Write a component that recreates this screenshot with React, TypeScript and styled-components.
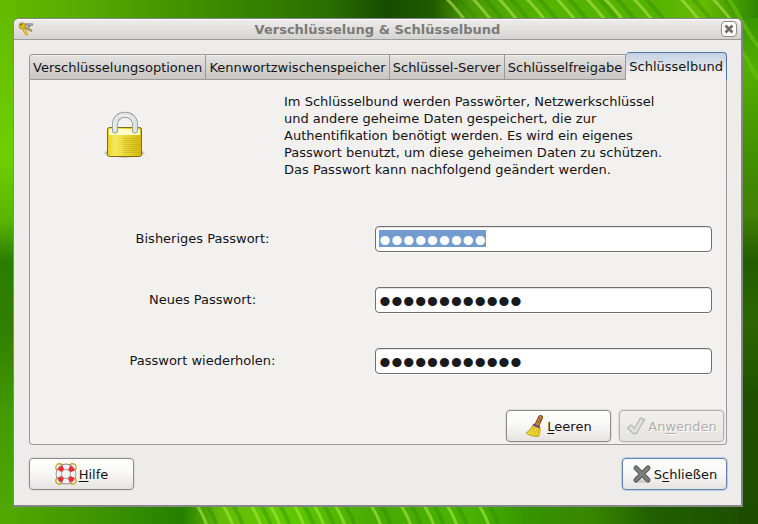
import React, { useEffect, useRef } from "react";
import styled, { createGlobalStyle, css } from "styled-components";

const Global = createGlobalStyle`
  *, *::before, *::after { box-sizing: border-box; }
  body { margin: 0; font: 13px/17px "DejaVu Sans", sans-serif; color: #141414; }
  button, input { font: inherit; color: inherit; }
`;

const Desktop = styled.div`
  position: relative;
  display: flex;
  min-height: 100vh;
  padding: 18px 15px 17px 13px;
  background: #2f7d02;
`;

const Wallpaper = styled.svg`
  position: absolute;
  inset: 0;
  width: 100%;
  height: 100%;
`;

const Dialog = styled.main`
  position: relative;
  flex: 1;
  min-width: 0;
  display: flex;
  flex-direction: column;
  background: #edeceb;
  border: 1px solid #858585;
  border-bottom-width: 2px;
  border-right-width: 2px;
  border-radius: 6px 6px 0 0;
`;

const TitleBar = styled.header`
  display: grid;
  grid-template-columns: 24px 1fr 24px;
  align-items: center;
  height: 21px;
  padding: 0 4px 0 4px;
  border-bottom: 1px solid #9b9b99;
  border-radius: 5px 5px 0 0;
  box-shadow: inset 0 1px #fbfbfb;
  background: linear-gradient(#eeedec, #e2e1df 50%, #d5d3d1);
`;

const Title = styled.h1`
  margin: 0;
  text-align: center;
  font-size: 13px;
  line-height: 17px;
  color: #7b7a77;
`;

const CloseButton = styled.button`
  display: grid;
  place-items: center;
  justify-self: end;
  width: 16px;
  height: 16px;
  padding: 0;
  background: #fbfbfb;
  border: 1px solid #8d8d8b;
  border-radius: 4px;
`;

const Content = styled.div`
  flex: 1;
  display: flex;
  flex-direction: column;
  padding: 12px 14px 15px 15px;
`;

const Tabs = styled.div`
  display: flex;
  align-items: flex-end;
`;

const Tab = styled.button<{ $active?: boolean }>`
  flex: 1 1 auto;
  height: 26px;
  padding: 0 2px;
  white-space: nowrap;
  border: 1px solid #989896;
  border-left-width: 0;
  background: linear-gradient(#e4e3e1, #c9c6c3);
  box-shadow: inset 0 1px #f1f0ef;
  &:first-child { border-left-width: 1px; border-top-left-radius: 3px; }
  ${p => p.$active && css`
    height: 28px;
    padding-bottom: 1px;
    border: 1px solid #5376a5;
    border-left-width: 0;
    border-bottom: 0;
    border-radius: 4px 4px 0 0;
    background: linear-gradient(#c3d0e4, #f2f1f0 80%);
    box-shadow: none;
  `}
`;

const Panel = styled.form`
  flex: 1;
  display: flex;
  flex-direction: column;
  justify-content: space-between;
  padding: 13px 2px 2px 0;
  background: #f2f1f0;
  border: 1px solid #9a9a98;
  border-top: 0;
  border-radius: 0 0 4px 4px;
`;

const Intro = styled.div`
  display: grid;
  grid-template-columns: 190px 1fr;
  column-gap: 64px;
`;

const LockCell = styled.div`
  display: flex;
  justify-content: center;
  padding-top: 18px;
`;

const Description = styled.p`
  margin: 0;
`;

const Fields = styled.div`
  display: grid;
  gap: 35px;
  padding: 11px 12px 0 0;
`;

const Field = styled.div`
  display: grid;
  grid-template-columns: 345px minmax(0, 1fr);
  align-items: center;
`;

const Label = styled.label`
  text-align: center;
`;

const InputFrame = styled.div`
  display: flex;
  align-items: flex-start;
  height: 26px;
  padding: 3px;
  background: #fff;
  border: 1px solid #6f6f6f;
  border-radius: 4px;
  box-shadow: inset 0 1px #e4e4e4, 0 1px #fafafa;
`;

const PasswordInput = styled.input`
  width: 100%;
  min-width: 0;
  height: 17px;
  padding: 5px 0 0;
  font: 34px/17px "Liberation Sans", sans-serif;
  color: #1a1a1a;
  background: none;
  border: 0;
  outline: 0;
  overflow: hidden;
  caret-color: transparent;
  &::selection { color: #fff; background: #729bd0; }
`;

const Actions = styled.div<{ $apart?: boolean }>`
  display: flex;
  justify-content: ${p => (p.$apart ? "space-between" : "flex-end")};
  gap: 8px;
  ${p => p.$apart && "padding: 13px 0 0 0;"}
`;

const Button = styled.button<{ $focus?: boolean }>`
  display: flex;
  align-items: center;
  justify-content: center;
  gap: 2px;
  min-width: 105px;
  height: 32px;
  padding: 0 5px;
  background: linear-gradient(#fff, #f8f8f7 45%, #e6e4e2);
  border: 1px solid #8b8b89;
  border-radius: 4px;
  box-shadow: 0 0 0 1px #e0dfde;
  ${p => p.$focus && css`
    border-color: #5f83b5;
    box-shadow: 0 0 0 1px #bccbe0;
  `}
  &:disabled {
    color: #b0adaa;
    background: linear-gradient(#f1f0ef, #e6e4e2);
    border-color: #b3b1af;
    text-shadow: 1px 1px #fff;
  }
`;

const Mnemonic = styled.u`
  text-underline-offset: 2px;
`;

const KeysIcon = () => (
  <svg width="16" height="16" viewBox="0 0 16 16" aria-hidden="true">
    <g fill="none" strokeLinecap="round">
      <path d="M6 3.500h8M11 4v1.500" stroke="#8b8b8b" strokeWidth="2.500" />
      <path d="M6 3h8" stroke="#b9b9b9" />
      <path d="M6 6l7 3.500" stroke="#8c7c4b" strokeWidth="2.500" />
      <path d="M6 6l7 3.500" stroke="#c9b565" />
      <path d="M5 7l3.500 6" stroke="#b79316" strokeWidth="3" />
      <path d="M5 7l3.500 6" stroke="#f0cc3c" strokeWidth="1.600" />
    </g>
    <circle cx="4.200" cy="5" r="3.200" fill="#dcb62c" stroke="#ab8a1c" strokeWidth=".8" />
    <circle cx="3.200" cy="3.400" r=".9" fill="#6d5712" />
  </svg>
);

const LockIcon = () => (
  <svg width="48" height="48" viewBox="0 0 48 48" aria-hidden="true">
    <defs>
      <linearGradient id="brass" x2="1">
        <stop stopColor="#e6d21c" /><stop offset=".2" stopColor="#f3e75e" />
        <stop offset=".5" stopColor="#ecd93a" /><stop offset="1" stopColor="#d2b90c" />
      </linearGradient>
      <radialGradient id="lockShade"><stop stopColor="#333" /><stop offset=".7" stopColor="#555" stopOpacity=".8" /><stop offset="1" stopColor="#555" stopOpacity="0" /></radialGradient>
    </defs>
    <ellipse cx="23.500" cy="42" rx="21" ry="5" fill="url(#lockShade)" />
    <rect x="6.500" y="16.500" width="34" height="29" rx="2" fill="url(#brass)" stroke="#806d09" />
    <path d="M8 18h31v6H8z" fill="#fffcc4" />
    <path d="M22 27.500h17M22 29.500h17M22 31.500h17M22 33.500h17M22 35.500h17M22 37.500h17M22 39.500h17M22 41.500h17" stroke="#b79d13" opacity=".35" />
    <path d="M14 19.500v-6c0-13 20-13 20 0v6" fill="none" stroke="#8f9592" strokeWidth="6" strokeLinecap="round" />
    <path d="M14 19.500v-6c0-13 20-13 20 0v6" fill="none" stroke="#dee2e0" strokeWidth="4.400" strokeLinecap="round" />
    <path d="M13 19v-5c0-11 14-13 19-5" fill="none" stroke="#fafafa" />
  </svg>
);

const BroomIcon = () => (
  <svg width="20" height="24" viewBox="0 0 20 24" aria-hidden="true">
    <path d="M12 11l3.500-7.500" stroke="#71420f" strokeWidth="5" strokeLinecap="round" />
    <path d="M12 11l3.500-7.500" stroke="#c98a45" strokeWidth="3" strokeLinecap="round" />
    <path d="M14.500 4l1 3M13 7l1 2" stroke="#7d4a17" />
    <path d="M8 11l7 3c.5 3-.2 6-1.500 8.500L8 22c-3-.5-5-1.500-7-3 3-2 5.500-4.500 7-8z" fill="#f1dd3a" stroke="#b89d13" />
    <path d="M4 19l5-6M6.500 20.500l4-7M9.500 21.500l2.500-7M12 22l1.500-7" stroke="#c4a81e" fill="none" strokeWidth=".8" />
    <path d="M8 10.500l7 3" stroke="#75507b" strokeWidth="2.400" />
  </svg>
);

const CheckIcon = () => (
  <svg width="20" height="22" viewBox="0 0 20 22" aria-hidden="true">
    <path d="M1.500 13l3.500-3 3.500 3.500L14.500 3l4 1.500L10.500 18.500H7z" fill="#e0e2dc" stroke="#b9bbb5" strokeWidth="1.400" strokeLinejoin="round" />
  </svg>
);

const CrossIcon = () => (
  <svg width="20" height="20" viewBox="0 0 20 20" aria-hidden="true">
    <ellipse cx="10" cy="17" rx="9" ry="2" fill="#d1cfcd" />
    <path d="M4 4l12 12M16 4L4 16" stroke="#555753" strokeWidth="5" strokeLinecap="round" />
    <path d="M4 4l12 12M16 4L4 16" stroke="#7d7f7b" strokeWidth="3" strokeLinecap="round" />
  </svg>
);

const HelpIcon = () => (
  <svg width="22" height="22" viewBox="0 0 22 22" aria-hidden="true">
    <g fill="none" stroke="#c9a51c" strokeWidth="1.400"><circle cx="4.500" cy="4.500" r="3.700" /><circle cx="17.500" cy="4.500" r="3.700" /><circle cx="4.500" cy="17.500" r="3.700" /><circle cx="17.500" cy="17.500" r="3.700" /></g>
    <circle cx="11" cy="11" r="7.200" fill="none" stroke="#85868a" strokeWidth="6.400" />
    <circle cx="11" cy="11" r="7.200" fill="none" stroke="#f2f2f2" strokeWidth="4.800" />
    <circle cx="11" cy="11" r="7.200" fill="none" stroke="#ea2f33" strokeWidth="4.800" strokeDasharray="5.200 6.110" strokeDashoffset="-3.050" />
  </svg>
);

const TOP_VEINS = [448, 474, 500, 528, 558, 588, 606, 635, 682, 714];
const BOTTOM_VEINS = [200, 226, 254, 273, 297, 317, 338, 374, 404, 427, 450, 482];

const LeafWallpaper = () => (
  <Wallpaper viewBox="0 0 758 524" preserveAspectRatio="none" aria-hidden="true">
    <defs>
      <linearGradient id="top">
        <stop stopColor="#62b900" /><stop offset=".1" stopColor="#59ac00" /><stop offset=".27" stopColor="#3d8d00" />
        <stop offset=".43" stopColor="#297000" /><stop offset=".51" stopColor="#174c00" /><stop offset=".57" stopColor="#1f5a00" />
        <stop offset=".62" stopColor="#4b9c06" /><stop offset=".72" stopColor="#54b400" /><stop offset=".86" stopColor="#55b200" />
        <stop offset=".93" stopColor="#66bb02" /><stop offset="1" stopColor="#2e8500" />
      </linearGradient>
      <linearGradient id="bottom">
        <stop stopColor="#51a900" /><stop offset=".12" stopColor="#419600" /><stop offset=".24" stopColor="#258000" />
        <stop offset=".29" stopColor="#65bb06" /><stop offset=".38" stopColor="#5fca00" /><stop offset=".5" stopColor="#48a900" />
        <stop offset=".62" stopColor="#49b400" /><stop offset=".7" stopColor="#359300" /><stop offset=".78" stopColor="#388600" />
        <stop offset=".86" stopColor="#206000" /><stop offset="1" stopColor="#1d4b00" />
      </linearGradient>
      <linearGradient id="left" x2="0" y2="1">
        <stop stopColor="#62b900" /><stop offset=".3" stopColor="#70ce00" /><stop offset=".42" stopColor="#5bb400" />
        <stop offset=".5" stopColor="#2b7c00" /><stop offset=".63" stopColor="#317f00" /><stop offset=".8" stopColor="#459b00" />
        <stop offset="1" stopColor="#51a900" />
      </linearGradient>
      <linearGradient id="right" x2="0" y2="1">
        <stop stopColor="#389600" /><stop offset=".1" stopColor="#54ae00" /><stop offset=".28" stopColor="#3f8f00" />
        <stop offset=".39" stopColor="#447f05" /><stop offset=".48" stopColor="#225c00" /><stop offset=".6" stopColor="#2d6500" />
        <stop offset=".75" stopColor="#205000" /><stop offset="1" stopColor="#1d4b00" />
      </linearGradient>
    </defs>
    <path d="M0 0h758v60H0z" fill="url(#top)" />
    <path d="M0 464h758v60H0z" fill="url(#bottom)" />
    <path d="M0 0h16v524H0z" fill="url(#left)" />
    <path d="M738 18h20v506h-20z" fill="url(#right)" />
    <g fill="none" strokeWidth="3" opacity=".65">
      {TOP_VEINS.map(x => <path key={x} d={`M${x - 2} -2q9 9 19 22`} stroke="#a9df4c" />)}
      {BOTTOM_VEINS.map(x => <path key={x} d={`M${x - 4} 504q6 8 12 24`} stroke="#a0e63c" />)}
    </g>
    <g fill="none" strokeWidth="4" opacity=".4">
      {TOP_VEINS.map(x => <path key={x} d={`M${x + 10} -2q9 9 19 22`} stroke="#318900" />)}
      {BOTTOM_VEINS.map(x => <path key={x} d={`M${x + 6} 504q6 8 12 24`} stroke="#318900" />)}
    </g>
    <path d="M728 -2c14 20 20 38 32 50M742 52c7 9 10 18 16 27" stroke="#67c007" strokeWidth="4" fill="none" opacity=".7" />
  </Wallpaper>
);

const TABS = ["Verschlüsselungsoptionen", "Kennwortzwischenspeicher", "Schlüssel-Server", "Schlüsselfreigabe", "Schlüsselbund"];

export default function App() {
  const first = useRef<HTMLInputElement>(null);
  useEffect(() => {
    first.current?.focus();
    first.current?.select();
  }, []);
  return (
    <Desktop>
      <Global />
      <LeafWallpaper />
      <Dialog>
        <TitleBar>
          <KeysIcon />
          <Title>Verschlüsselung &amp; Schlüsselbund</Title>
          <CloseButton type="button" aria-label="Fenster schließen">
            <svg width="10" height="10" viewBox="0 0 10 10" aria-hidden="true"><path d="M1.500 1.500l7 7M8.500 1.500l-7 7" stroke="#6d6c6a" strokeWidth="2.600" /></svg>
          </CloseButton>
        </TitleBar>
        <Content>
          <Tabs role="tablist">
            {TABS.map((t, i) => <Tab key={t} type="button" role="tab" aria-selected={i === 4} $active={i === 4}>{t}</Tab>)}
          </Tabs>
          <Panel onSubmit={e => e.preventDefault()}>
            <Intro>
              <LockCell><LockIcon /></LockCell>
              <Description>
                Im Schlüsselbund werden Passwörter, Netzwerkschlüssel<br />
                und andere geheime Daten gespeichert, die zur<br />
                Authentifikation benötigt werden. Es wird ein eigenes<br />
                Passwort benutzt, um diese geheimen Daten zu schützen.<br />
                Das Passwort kann nachfolgend geändert werden.
              </Description>
            </Intro>
            <Fields>
              <Field>
                <Label htmlFor="old">Bisheriges Passwort:</Label>
                <InputFrame><PasswordInput ref={first} id="old" type="password" defaultValue="123456789" /></InputFrame>
              </Field>
              <Field>
                <Label htmlFor="new">Neues Passwort:</Label>
                <InputFrame><PasswordInput id="new" type="password" defaultValue="123456789012" /></InputFrame>
              </Field>
              <Field>
                <Label htmlFor="repeat">Passwort wiederholen:</Label>
                <InputFrame><PasswordInput id="repeat" type="password" defaultValue="123456789012" /></InputFrame>
              </Field>
            </Fields>
            <Actions>
              <Button type="reset"><BroomIcon /><span><Mnemonic>L</Mnemonic>eeren</span></Button>
              <Button type="submit" disabled><CheckIcon /><span>An<Mnemonic>w</Mnemonic>enden</span></Button>
            </Actions>
          </Panel>
          <Actions $apart>
            <Button type="button"><HelpIcon /><span><Mnemonic>H</Mnemonic>ilfe</span></Button>
            <Button type="button" $focus><CrossIcon /><span>S<Mnemonic>c</Mnemonic>hließen</span></Button>
          </Actions>
        </Content>
      </Dialog>
    </Desktop>
  );
}
